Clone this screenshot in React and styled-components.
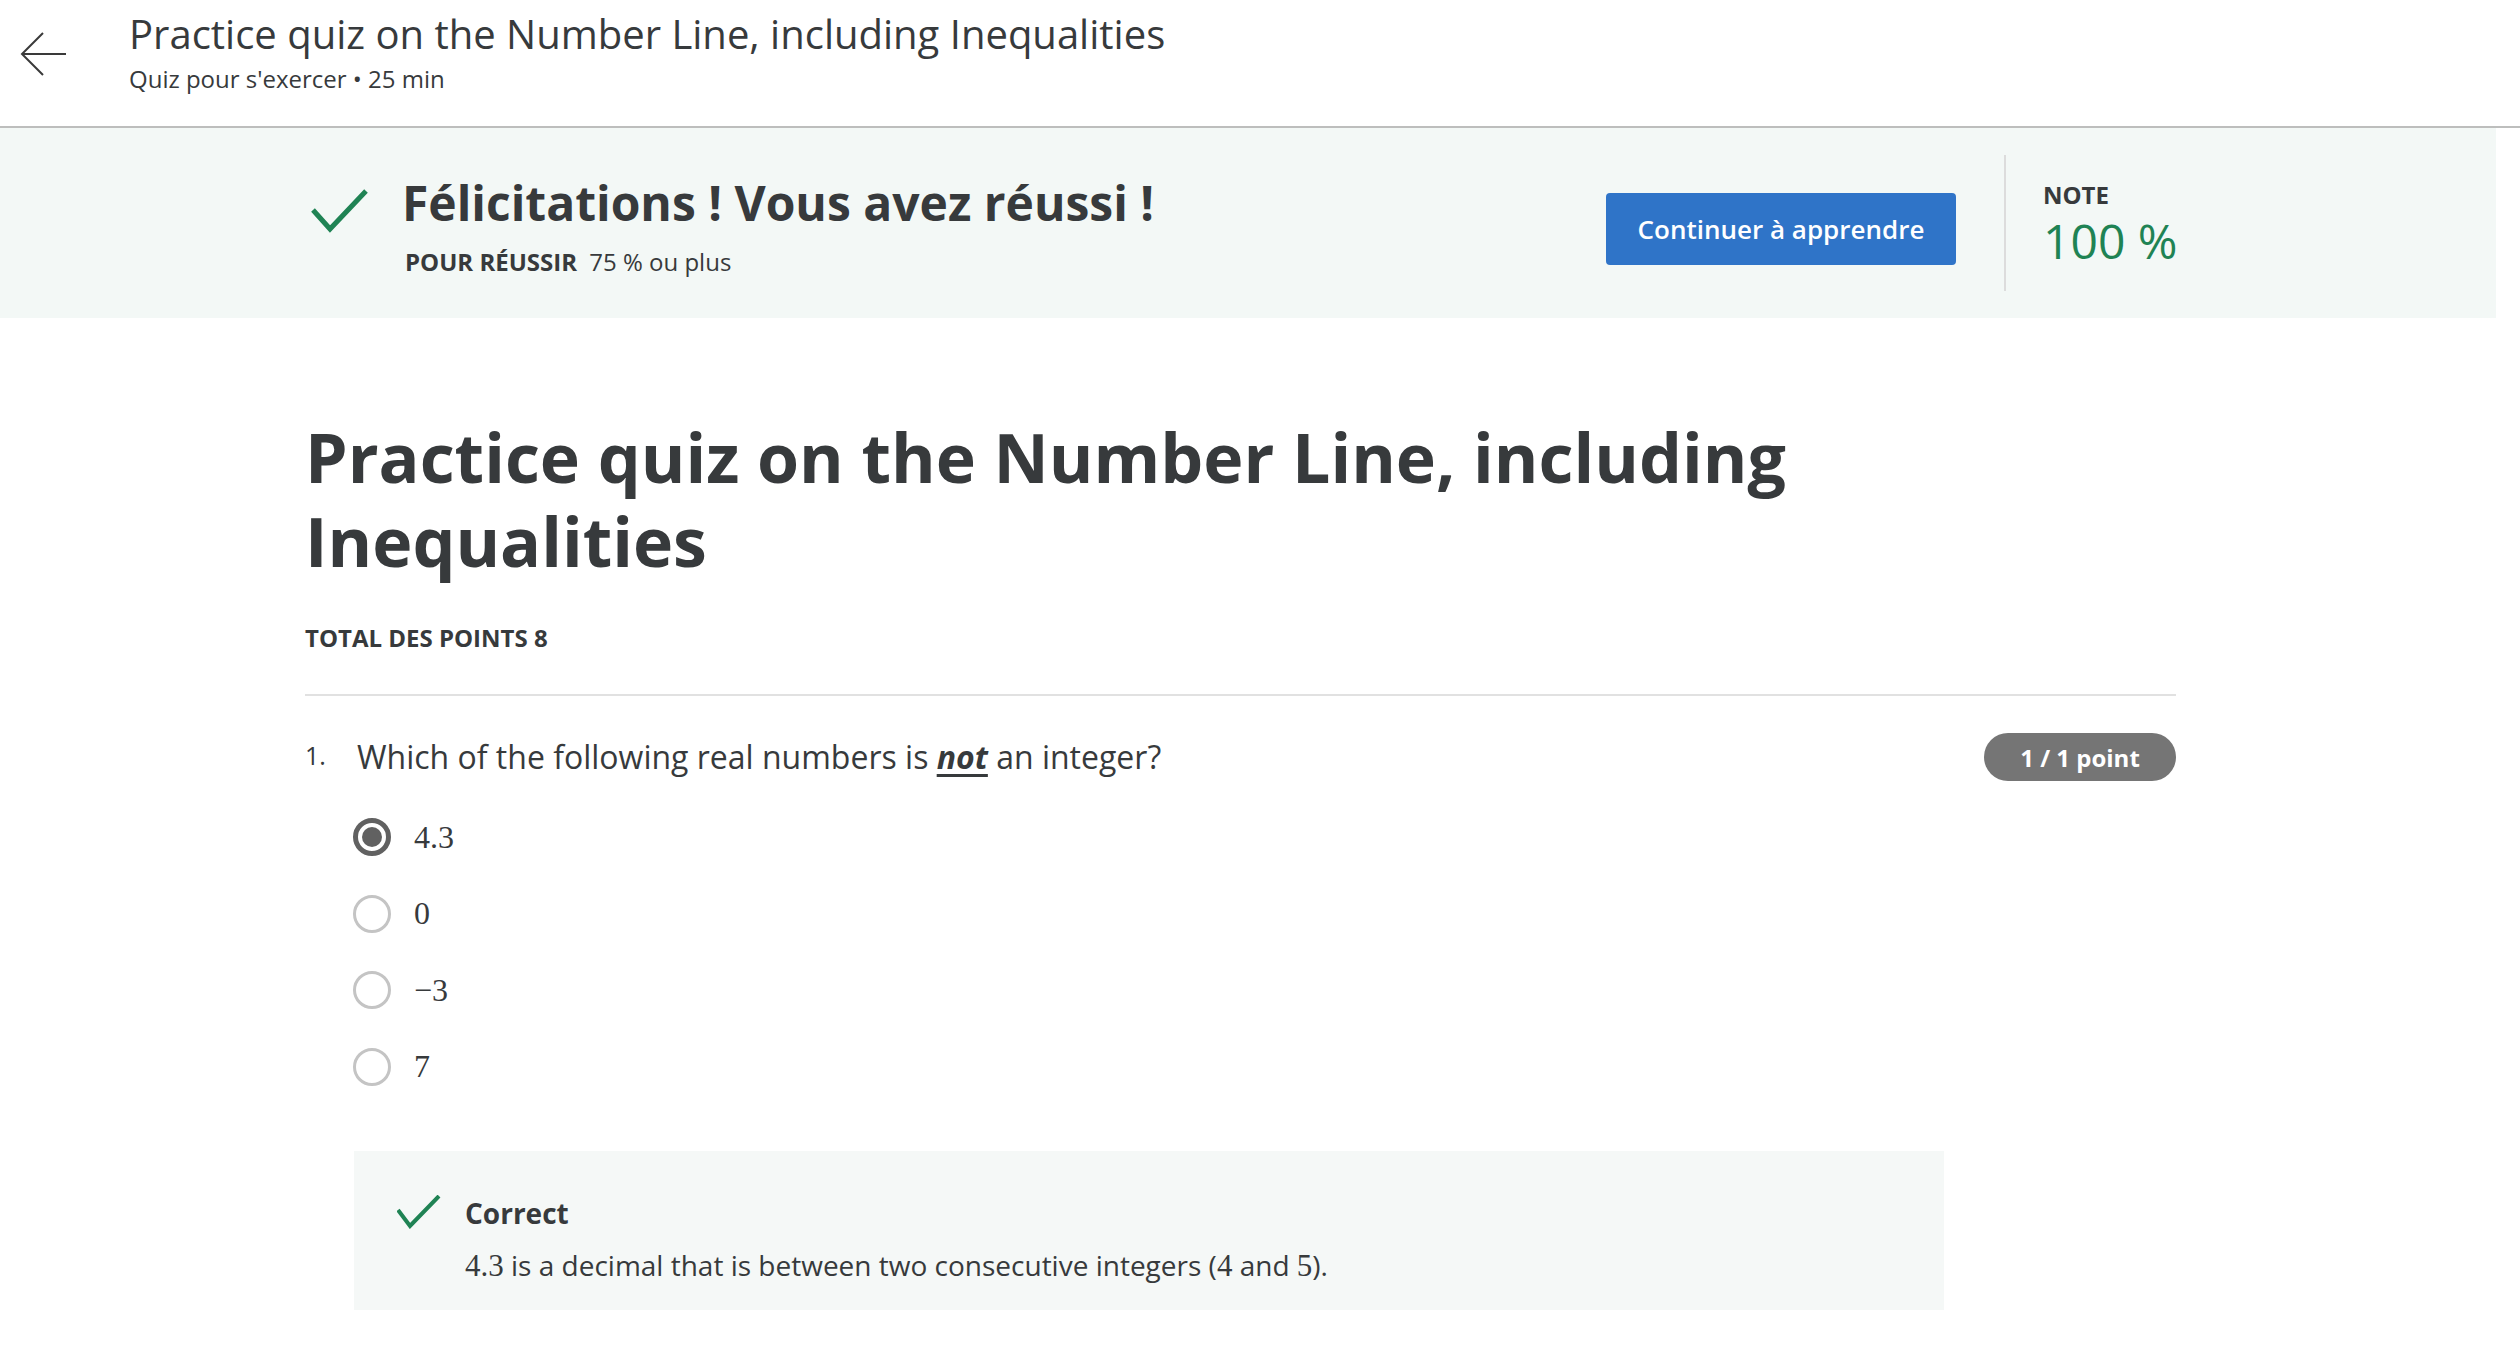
import React from 'react';
import styled, { createGlobalStyle } from 'styled-components';

const GlobalStyle = createGlobalStyle`
  body {
    margin: 0;
    background: #ffffff;
    font-family: "Open Sans", "Liberation Sans", sans-serif;
    color: #373a3c;
  }
`;

const options = [
  { label: '4.3', checked: true },
  { label: '0' },
  { label: '\u22123' },
  { label: '7' },
];

const CheckIcon = ({ size = 60, stroke = 5 }) => (
  <svg width={size} height={size * 0.75} viewBox="0 0 60 45" fill="none">
    <polyline
      points="3,22 20,41 56,3"
      stroke="#1f8354"
      strokeWidth={stroke}
      strokeLinejoin="miter"
    />
  </svg>
);

const App = () => {
  return (
    <>
      <GlobalStyle />
      <Page>
        <TopBar>
          <BackButton aria-label="back">
            <svg width="48" height="46" viewBox="0 0 48 46" fill="none">
              <path d="M46 23H3M23 2L2 23L23 44" stroke="#3a3a3a" strokeWidth="2" />
            </svg>
          </BackButton>
          <TopTitles>
            <TopTitle>Practice quiz on the Number Line, including Inequalities</TopTitle>
            <TopSub>Quiz pour s'exercer • 25 min</TopSub>
          </TopTitles>
        </TopBar>

        <Banner>
          <Container>
            <BannerLeft>
              <BannerCheck>
                <CheckIcon size={60} stroke={5} />
              </BannerCheck>
              <div>
                <BannerTitle>Félicitations ! Vous avez réussi !</BannerTitle>
                <PassLine>
                  <strong>POUR RÉUSSIR</strong> 75 % ou plus
                </PassLine>
              </div>
            </BannerLeft>
            <ContinueButton>Continuer à apprendre</ContinueButton>
            <GradeBox>
              <GradeLabel>NOTE</GradeLabel>
              <GradeValue>100 %</GradeValue>
            </GradeBox>
          </Container>
        </Banner>

        <Main>
          <QuizTitle>Practice quiz on the Number Line, including Inequalities</QuizTitle>
          <TotalPoints>TOTAL DES POINTS 8</TotalPoints>
          <Divider />
          <QuestionRow>
            <QNumber>1.</QNumber>
            <QText>
              Which of the following real numbers is <Emph>not</Emph> an integer?
            </QText>
            <PointBadge>1 / 1 point</PointBadge>
          </QuestionRow>
          <OptionList>
            {options.map((o) => (
              <Option key={o.label}>
                <Radio $checked={o.checked} />
                <MathText>{o.label}</MathText>
              </Option>
            ))}
          </OptionList>
          <Feedback>
            <FeedbackCheck>
              <svg width="44" height="34" viewBox="0 0 44 34" fill="none">
                <polyline points="1,15 13,31 42,1" stroke="#1f8354" strokeWidth="4" />
              </svg>
            </FeedbackCheck>
            <div>
              <FeedbackTitle>Correct</FeedbackTitle>
              <FeedbackText>
                <MathInline>4.3</MathInline> is a decimal that is between two consecutive integers (
                <MathInline>4</MathInline> and <MathInline>5</MathInline>).
              </FeedbackText>
            </div>
          </Feedback>
        </Main>
      </Page>
    </>
  );
};

const Page = styled.div`
  width: 2520px;
  min-height: 1354px;
`;

const TopBar = styled.header`
  display: flex;
  align-items: flex-start;
  height: 128px;
  box-sizing: border-box;
  border-bottom: 2px solid #bdbebd;
`;

const BackButton = styled.div`
  width: 48px;
  margin: 31px 0 0 20px;
  display: flex;
`;

const TopTitles = styled.div`
  margin-left: 61px;
  padding-top: 9px;
`;

const TopTitle = styled.div`
  font-size: 40px;
  line-height: 50px;
  color: #373a3c;
`;

const TopSub = styled.div`
  margin-top: 4px;
  font-size: 24px;
  line-height: 32px;
  color: #373a3c;
`;

const Banner = styled.section`
  background: #f3f8f6;
  height: 190px;
  width: 2496px;
  display: flex;
  align-items: center;
`;

const Container = styled.div`
  width: 1871px;
  margin-left: 305px;
  display: flex;
  align-items: center;
`;

const BannerLeft = styled.div`
  flex: 1;
  display: flex;
  align-items: flex-start;
  padding-top: 6px;
`;

const BannerCheck = styled.div`
  margin: 14px 32px 0 5px;
`;

const BannerTitle = styled.h1`
  margin: 0;
  font-size: 48px;
  line-height: 58px;
  font-weight: 700;
  color: #373a3c;
`;

const PassLine = styled.div`
  margin-top: 14px;
  font-size: 24px;
  line-height: 32px;
  padding-left: 3px;

  strong {
    font-weight: 700;
    margin-right: 6px;
  }
`;

const ContinueButton = styled.button`
  width: 350px;
  height: 72px;
  border: none;
  border-radius: 4px;
  background: #2f74c8;
  color: #ffffff;
  font-family: "Open Sans", sans-serif;
  font-size: 26px;
  font-weight: 600;
  margin: 11px 48px 0 0;
  cursor: pointer;
`;

const GradeBox = styled.div`
  border-left: 2px solid #dcdcdc;
  height: 136px;
  box-sizing: border-box;
  padding: 24px 0 0 37px;
  width: 172px;
  white-space: nowrap;
`;

const GradeLabel = styled.div`
  font-size: 24px;
  line-height: 32px;
  font-weight: 700;
`;

const GradeValue = styled.div`
  font-size: 48px;
  line-height: 56px;
  color: #1f8354;
  margin-top: 2px;
`;

const Main = styled.main`
  width: 1871px;
  margin-left: 305px;
  padding-top: 97px;
`;

const QuizTitle = styled.h2`
  margin: 0;
  font-size: 68px;
  line-height: 84px;
  font-weight: 700;
  width: 1560px;
  color: #373a3c;
`;

const TotalPoints = styled.div`
  margin-top: 39px;
  font-size: 24px;
  line-height: 32px;
  font-weight: 700;
`;

const Divider = styled.hr`
  border: none;
  border-top: 2px solid #e1e1e1;
  margin: 40px 0 0;
`;

const QuestionRow = styled.div`
  display: flex;
  align-items: center;
  margin-top: 37px;
`;

const QNumber = styled.span`
  font-size: 25px;
  width: 52px;
  align-self: flex-start;
  padding-top: 5px;
`;

const QText = styled.div`
  flex: 1;
  font-size: 32px;
  line-height: 44px;
`;

const Emph = styled.em`
  font-weight: 700;
  text-decoration: underline;
  text-underline-offset: 5px;
`;

const PointBadge = styled.span`
  width: 192px;
  height: 48px;
  border-radius: 24px;
  background: #757575;
  color: #ffffff;
  font-size: 24px;
  font-weight: 700;
  display: flex;
  align-items: center;
  justify-content: center;
`;

const OptionList = styled.div`
  margin-top: 18px;
  padding-left: 48px;
`;

const Option = styled.label`
  display: flex;
  align-items: center;
  height: 76.5px;
`;

const Radio = styled.span`
  width: 38px;
  height: 38px;
  box-sizing: border-box;
  border-radius: 50%;
  border: ${(p) => (p.$checked ? '5px solid #616161' : '3px solid #c4c4c4')};
  position: relative;
  margin-right: 23px;

  &::after {
    content: '';
    display: ${(p) => (p.$checked ? 'block' : 'none')};
    position: absolute;
    inset: 4px;
    border-radius: 50%;
    background: #616161;
  }
`;

const MathText = styled.span`
  font-family: "Liberation Serif", "DejaVu Serif", serif;
  font-size: 32px;
  color: #373a3c;
`;

const Feedback = styled.div`
  margin-top: 46px;
  margin-left: 49px;
  width: 1590px;
  height: 159px;
  box-sizing: border-box;
  background: #f5f8f7;
  display: flex;
  align-items: flex-start;
  padding: 43px 0 0 43px;
`;

const FeedbackCheck = styled.div`
  margin: 1px 24px 0 0;
`;

const FeedbackTitle = styled.div`
  font-size: 28px;
  line-height: 38px;
  font-weight: 700;
`;

const FeedbackText = styled.div`
  margin-top: 14px;
  font-size: 28px;
  line-height: 38px;
`;

const MathInline = styled.span`
  font-family: "Liberation Serif", "DejaVu Serif", serif;
  font-size: 31px;
`;

export default App;
